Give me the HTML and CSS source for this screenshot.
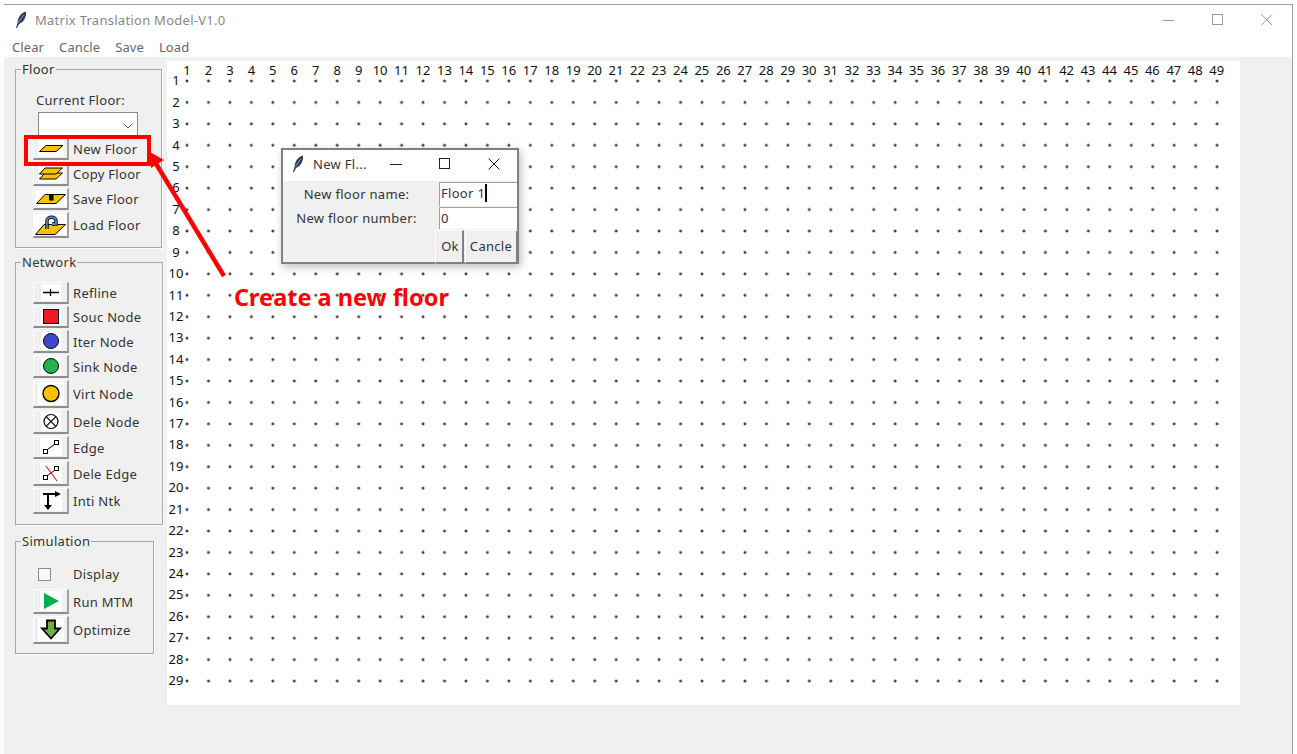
FILE: index.html
```html
<!DOCTYPE html>
<html>
<head>
  <meta charset='utf8'>
  <title>Matrix Translation Model-V1.0</title>
  <link rel="stylesheet" href="styles.css">
</head>
<body>
  <div class='window'>
    <div class='titlebar'>
      <svg class='feather' width='12' height='18' viewBox='0 0 12 18'><path d='M1 17 L2.5 12 C3 6 6 2 11 .5 C11.5 6 9 11 4 13 L2 17 Z' fill='#2a3b5c'/><path d='M3.5 11.5 L8.5 4' stroke='#a9c0dd' stroke-width='.8'/></svg>
      <span class='title'>Matrix Translation Model-V1.0</span>
      <div class='controls'>
        <svg width='12' height='12' viewBox='0 0 12 12'><path d='M0 6.5H11' stroke='#999'/></svg>
        <svg width='12' height='12' viewBox='0 0 12 12'><rect x='.5' y='.5' width='10' height='10' fill='none' stroke='#999'/></svg>
        <svg width='12' height='12' viewBox='0 0 12 12'><path d='M.5 .5L11 11M11 .5L.5 11' stroke='#999'/></svg>
      </div>
    </div>
    <div class='menubar'>
      <span>Clear</span><span>Cancle</span><span>Save</span><span>Load</span>
    </div>
    <div class='main'>
      <div class='sidebar'>
        <fieldset class='group group-floor'>
          <legend>Floor</legend>
          <div class='current'>Current Floor:</div>
          <div class='combo'><svg width='10' height='6' viewBox='0 0 10 6'><path d='M.5 .5L5 5L9.5 .5' fill='none' stroke='#555'/></svg></div>
          <div class='tools'>
            <div class='tool'><div class='btn'><svg width='26' height='17' viewBox='0 0 26 17'><path d='M8 5.5H25L18 11.5H1.5Z' fill='#ffc000' stroke='#000'/></svg></div><span>New Floor</span></div>
            <div class='tool'><div class='btn'><svg width='26' height='19' viewBox='0 0 26 19'><path d='M7 9H24.5L18 15H1.5Z' fill='#ffc000' stroke='#000'/><path d='M7 4H24.5L18 10H1.5Z' fill='#ffc000' stroke='#000'/></svg></div><span>Copy Floor</span></div>
            <div class='tool'><div class='btn'><svg width='32' height='17' viewBox='0 0 32 17'><path d='M10 4.5H30.5L21 13.5H1.5Z' fill='#ffc000' stroke='#000'/><rect x='14' y='4.5' width='4.5' height='6' fill='#000'/></svg></div><span>Save Floor</span></div>
            <div class='tool'><div class='btn'><svg width='33' height='21' viewBox='0 0 33 21'><path d='M10 10.5H31.5L21 20.5H1.5Z' fill='#ffc000' stroke='#000'/><path d='M13 15V7C13 2 22 2 22 7V10H18' fill='none' stroke='#000' stroke-width='3.4'/><path d='M13 15V7C13 2 22 2 22 7V10H18' fill='none' stroke='#4f81bd' stroke-width='1.8'/></svg></div><span>Load Floor</span></div>
          </div>
        </fieldset>
        <fieldset class='group group-network'>
          <legend>Network</legend>
          <div class='tools'>
            <div class='tool'><div class='btn'><svg width='20' height='17' viewBox='0 0 20 17'><path d='M2 8.5H18M9.5 5V12' stroke='#000' stroke-width='1.3'/></svg></div><span>Refline</span></div>
            <div class='tool'><div class='btn'><svg width='20' height='17' viewBox='0 0 20 17'><rect x='2.5' y='1.5' width='15' height='14' fill='#ed1c24' stroke='#000'/></svg></div><span>Souc Node</span></div>
            <div class='tool'><div class='btn'><svg width='20' height='18' viewBox='0 0 20 18'><circle cx='10' cy='9' r='7.5' fill='#3f48cc' stroke='#000'/></svg></div><span>Iter Node</span></div>
            <div class='tool'><div class='btn'><svg width='20' height='18' viewBox='0 0 20 18'><circle cx='10' cy='9' r='7.5' fill='#22b14c' stroke='#000'/></svg></div><span>Sink Node</span></div>
            <div class='tool'><div class='btn'><svg width='26' height='23' viewBox='0 0 26 23'><circle cx='13' cy='11.5' r='8' fill='#ffc000' stroke='#000' stroke-width='1.4'/></svg></div><span>Virt Node</span></div>
            <div class='tool'><div class='btn'><svg width='20' height='19' viewBox='0 0 20 19'><circle cx='10' cy='9.5' r='7' fill='#fff' stroke='#000' stroke-width='1.2'/><path d='M5.2 4.7L14.8 14.3M14.8 4.7L5.2 14.3' stroke='#000' stroke-width='1.2'/></svg></div><span>Dele Node</span></div>
            <div class='tool'><div class='btn'><svg width='22' height='18' viewBox='0 0 22 18'><rect x='3.5' y='11.5' width='4' height='4' fill='none' stroke='#000'/><rect x='14.5' y='2.5' width='4' height='4' fill='none' stroke='#000'/><path d='M7.5 11.5L14.5 6.5' stroke='#000'/></svg></div><span>Edge</span></div>
            <div class='tool'><div class='btn'><svg width='22' height='20' viewBox='0 0 22 20'><rect x='3.5' y='12.5' width='4' height='4' fill='none' stroke='#000'/><rect x='14.5' y='3.5' width='4' height='4' fill='none' stroke='#000'/><path d='M7.5 12.5L14.5 7.5' stroke='#000'/><path d='M6 3L17 18' stroke='#ed1c24' stroke-width='1.2'/></svg></div><span>Dele Edge</span></div>
            <div class='tool'><div class='btn'><svg width='22' height='21' viewBox='0 0 22 21'><path d='M3 4H16M8 4V16' stroke='#000' stroke-width='2'/><path d='M15 1L21 4L15 7ZM4 15H12L8 20Z' fill='#000'/></svg></div><span>Inti Ntk</span></div>
          </div>
        </fieldset>
        <fieldset class='group group-sim'>
          <legend>Simulation</legend>
          <div class='check-row'><div class='check'></div><span>Display</span></div>
          <div class='tools'>
            <div class='tool'><div class='btn'><svg width='22' height='20' viewBox='0 0 22 20'><path d='M4 2L19 10L4 18Z' fill='#00b050'/></svg></div><span>Run MTM</span></div>
            <div class='tool'><div class='btn'><svg width='26' height='23' viewBox='0 0 26 23'><path d='M9 2.5H17V10.5H22L13 20.5L4 10.5H9Z' fill='#70ad47' stroke='#000' stroke-width='1.8'/></svg></div><span>Optimize</span></div>
          </div>
        </fieldset>
      </div>
      <div class='canvas'>
        <svg class='dots' width='1073' height='644'>
          <defs>
            <pattern id='dot' x='9.27' y='9.29' width='21.46' height='21.43' patternUnits='userSpaceOnUse'>
              <path d='M9.23 10.2h3v1h-3zM10.23 9.2h1v3h-1z' fill='#000'/>
            </pattern>
          </defs>
          <rect x='9.27' y='9.29' width='1051.54' height='621.47' fill='url(#dot)'/>
        </svg>
        <div class='col-labels'>
          <span>1</span><span>2</span><span>3</span><span>4</span><span>5</span><span>6</span><span>7</span><span>8</span><span>9</span><span>10</span>
          <span>11</span><span>12</span><span>13</span><span>14</span><span>15</span><span>16</span><span>17</span><span>18</span><span>19</span><span>20</span>
          <span>21</span><span>22</span><span>23</span><span>24</span><span>25</span><span>26</span><span>27</span><span>28</span><span>29</span><span>30</span>
          <span>31</span><span>32</span><span>33</span><span>34</span><span>35</span><span>36</span><span>37</span><span>38</span><span>39</span><span>40</span>
          <span>41</span><span>42</span><span>43</span><span>44</span><span>45</span><span>46</span><span>47</span><span>48</span><span>49</span>
        </div>
        <div class='row-labels'>
          <span>1</span><span>2</span><span>3</span><span>4</span><span>5</span><span>6</span><span>7</span><span>8</span><span>9</span><span>10</span>
          <span>11</span><span>12</span><span>13</span><span>14</span><span>15</span><span>16</span><span>17</span><span>18</span><span>19</span><span>20</span>
          <span>21</span><span>22</span><span>23</span><span>24</span><span>25</span><span>26</span><span>27</span><span>28</span><span>29</span>
        </div>
      </div>
    </div>
  </div>

  <!-- popup window on top of the app -->
  <div class='dialog'>
    <div class='dialog-title'>
      <svg class='feather' width='12' height='18' viewBox='0 0 12 18'><path d='M1 17 L2.5 12 C3 6 6 2 11 .5 C11.5 6 9 11 4 13 L2 17 Z' fill='#2a3b5c'/><path d='M3.5 11.5 L8.5 4' stroke='#a9c0dd' stroke-width='.8'/></svg>
      <span class='dialog-name'>New Fl...</span>
      <svg class='dlg-min' width='12' height='12' viewBox='0 0 12 12'><path d='M0 6.5H12' stroke='#222'/></svg>
      <svg class='dlg-max' width='12' height='12' viewBox='0 0 12 12'><rect x='.5' y='.5' width='10' height='10' fill='none' stroke='#222'/></svg>
      <svg class='dlg-close' width='12' height='12' viewBox='0 0 12 12'><path d='M.5 .5L11.5 11.5M11.5 .5L.5 11.5' stroke='#222'/></svg>
    </div>
    <div class='dialog-form'>
      <label class='row-a'>New floor name:</label>
      <div class='entry row-a'>Floor 1<i class='caret'></i></div>
      <label class='row-b'>New floor number:</label>
      <div class='entry row-b'>0</div>
    </div>
    <div class='dialog-btns'>
      <div class='dlg-btn ok'>Ok</div>
      <div class='dlg-btn cancle'>Cancle</div>
    </div>
  </div>

  <svg class='annot' width='1297' height='754'>
    <rect x='26' y='137' width='123' height='27' fill='none' stroke='#f00' stroke-width='4'/>
    <path d='M155 162L224 276' stroke='#f00' stroke-width='4.5' fill='none'/>
    <path d='M150 152L164 160L151 168Z' fill='#f00'/>
  </svg>
  <div class='annot-text'>Create a new floor</div>
</body>
</html>
```

FILE: styles.css
```css
html, body {
  margin: 0;
  padding: 0;
}
body {
  background: #fff;
  font-family: "Noto Sans", "Open Sans", sans-serif;
  font-size: 13px;
  color: #333;
  overflow: hidden;
  height: 754px;
  position: relative;
}
.window {
  box-sizing: border-box;
  margin: 4px 0 0 4px;
  width: 1289px;
  height: 750px;
  border-top: 1px solid #a0a0a0;
  border-right: 1px solid #a0a0a0;
  display: flex;
  flex-direction: column;
}
.titlebar {
  box-sizing: border-box;
  height: 33px;
  display: flex;
  align-items: center;
  padding: 0 19px 4px 11px;
  flex: none;
}
.title {
  margin-left: 8px;
  color: #888;
  letter-spacing: .27px;
}
.controls {
  margin-left: auto;
  display: flex;
  gap: 37px;
}
.menubar {
  box-sizing: border-box;
  height: 19px;
  display: flex;
  align-items: center;
  padding: 0 0 2px 8px;
  gap: 15px;
  color: #666;
  letter-spacing: .1px;
  flex: none;
}
.main {
  flex: 1;
  background: #f0f0f0;
  display: flex;
  min-height: 0;
}
.sidebar {
  box-sizing: border-box;
  width: 163px;
  padding: 3px 0 0 11px;
  flex: none;
  letter-spacing: .3px;
}
.group {
  box-sizing: border-box;
  margin: 0;
  padding: 0;
  border: 1px solid #a6a6a6;
  box-shadow: 1px 1px 0 #fff;
  min-width: 0;
}
.group > div {
  margin-left: 17px;
}
.group legend {
  padding: 0 1px;
  margin-left: 5px;
  line-height: 18px;
  height: 18px;
}
.group-floor {
  width: 147px;
  padding-top: 13px;
  padding-bottom: 9px;
}
.group-network {
  width: 148px;
  margin-top: 5px;
  padding-top: 11px;
  padding-bottom: 10px;
}
.group-sim {
  width: 139px;
  margin-top: 7px;
  padding-top: 15px;
  padding-bottom: 9px;
}
.current {
  line-height: 18px;
  padding-left: 3px;
}
.group > .combo {
  box-sizing: border-box;
  width: 100px;
  height: 25px;
  margin: 3px 0 1px 22px;
  background: #fff;
  border: 1px solid #8a8a8a;
  border-bottom: 0;
  display: flex;
  align-items: flex-end;
  justify-content: flex-end;
  padding: 0 4px 8px 0;
}
.tools {
  display: flex;
  flex-direction: column;
  gap: 2px;
}
.tool {
  display: flex;
  align-items: center;
  gap: 4px;
}
.btn {
  box-sizing: border-box;
  width: 36px;
  display: flex;
  justify-content: center;
  padding: 1px 0;
  border-top: 1px solid #fff;
  border-left: 1px solid #fff;
  border-bottom: 2px solid #8c8c8c;
  border-right: 2px solid #a0a0a0;
  flex: none;
}
.btn svg {
  display: block;
  background: #fff;
}
.check-row {
  display: flex;
  align-items: center;
  height: 18px;
  margin-bottom: 6px;
}
.check {
  box-sizing: border-box;
  width: 13px;
  height: 13px;
  margin: 0 22px 0 5px;
  background: #f8f8f8;
  border: 1px solid #8a8a8a;
}
.canvas {
  width: 1073px;
  height: 644px;
  margin-top: 4px;
  background: #fff;
  display: grid;
  color: #111;
}
.canvas > * {
  grid-area: 1 / 1;
}
.dots {
  display: block;
}
.col-labels {
  display: flex;
  padding-left: 9.27px;
  height: 18px;
  line-height: 18px;
}
.col-labels span {
  width: 21.46px;
  flex: none;
  text-align: center;
}
.row-labels {
  width: 18px;
  padding-top: 9.29px;
  display: flex;
  flex-direction: column;
}
.row-labels span {
  height: 21.43px;
  line-height: 21.43px;
  flex: none;
  text-align: center;
}

.dialog {
  box-sizing: border-box;
  position: absolute;
  left: 281px;
  top: 148px;
  width: 238px;
  height: 116px;
  background: #f0f0f0;
  border: 2px solid #808080;
  box-shadow: 2px 3px 8px rgba(0, 0, 0, .25);
  letter-spacing: .3px;
}
.dialog-title {
  box-sizing: border-box;
  height: 31px;
  background: #fff;
  display: flex;
  align-items: center;
  padding: 0 0 4px 9px;
}
.dialog-name {
  width: 77px;
  margin-left: 9px;
  white-space: nowrap;
}
.dlg-max {
  margin-left: 37px;
}
.dlg-close {
  margin-left: 37px;
}
.dialog-form {
  display: grid;
  grid-template-columns: 147px 1fr;
  column-gap: 9px;
  row-gap: 1px;
  padding-top: 1px;
}
.dialog-form label {
  text-align: center;
  align-self: center;
}
.entry {
  box-sizing: border-box;
  background: #fff;
  border-top: 1px solid #a0a0a0;
  border-left: 1px solid #a0a0a0;
  padding: 0 0 1px 1px;
  display: flex;
  align-items: center;
  white-space: pre;
}
.entry.row-a {
  height: 24px;
  padding-bottom: 3px;
}
.entry.row-b {
  height: 22px;
}
.caret {
  display: block;
  width: 2px;
  height: 18px;
  background: #000;
}
.dialog-btns {
  display: flex;
  justify-content: flex-end;
  gap: 1px;
  margin: 1px -1px 0 0;
}
.dlg-btn {
  box-sizing: border-box;
  height: 34px;
  line-height: 30px;
  text-align: center;
  border-top: 1px solid #fff;
  border-left: 1px solid #fff;
  border-bottom: 2px solid #808080;
  border-right: 2px solid #808080;
}
.ok {
  width: 29px;
  padding-left: 2px;
}
.cancle {
  width: 53px;
}

.annot {
  position: absolute;
  left: 0;
  top: 0;
  pointer-events: none;
}
.annot-text {
  position: absolute;
  left: 234px;
  top: 282px;
  color: #f00;
  font-size: 23.5px;
  font-weight: bold;
  line-height: 30px;
  white-space: nowrap;
}
```
